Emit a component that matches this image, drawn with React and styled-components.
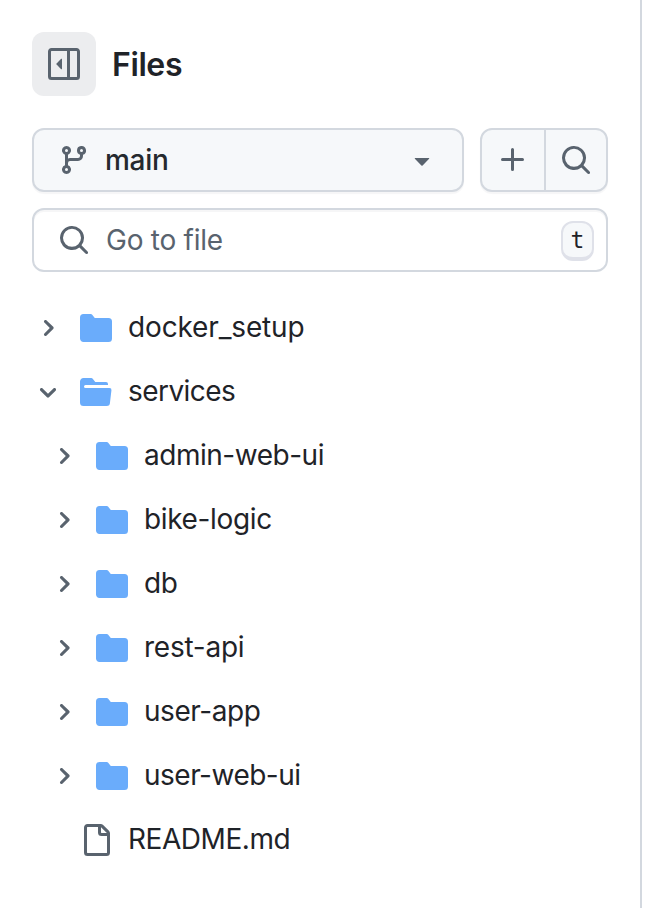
import React from "react";
import styled, { createGlobalStyle } from "styled-components";

const Global = createGlobalStyle`
  * { box-sizing: border-box; }
  body { margin: 0; background: #fff; font-family: Inter, "Liberation Sans", sans-serif; color: #1f2328; }
`;

const PATHS = {
  sidebar: [
    "m4.177 7.823 2.396-2.396A.25.25 0 0 1 7 5.604v4.792a.25.25 0 0 1-.427.177L4.177 8.177a.25.25 0 0 1 0-.354Z",
    "M0 1.75C0 .784.784 0 1.75 0h12.5C15.216 0 16 .784 16 1.75v12.5A1.75 1.75 0 0 1 14.25 16H1.75A1.75 1.75 0 0 1 0 14.25Zm1.75-.25a.25.25 0 0 0-.25.25v12.5c0 .138.112.25.25.25H9.5v-13Zm12.5 13a.25.25 0 0 0 .25-.25V1.75a.25.25 0 0 0-.25-.25H11v13Z",
  ],
  branch: [
    "M9.5 3.25a2.25 2.25 0 1 1 3 2.122V6A2.5 2.5 0 0 1 10 8.5H6a1 1 0 0 0-1 1v1.128a2.251 2.251 0 1 1-1.5 0V5.372a2.25 2.25 0 1 1 1.5 0v1.836A2.493 2.493 0 0 1 6 7h4a1 1 0 0 0 1-1v-.628A2.25 2.25 0 0 1 9.5 3.25Zm-6 0a.75.75 0 1 0 1.5 0 .75.75 0 0 0-1.5 0Zm8.25-.75a.75.75 0 1 0 0 1.5.75.75 0 0 0 0-1.5ZM4.25 12a.75.75 0 1 0 0 1.5.75.75 0 0 0 0-1.5Z",
  ],
  triangle: [
    "m4.427 7.427 3.396 3.396a.25.25 0 0 0 .354 0l3.396-3.396A.25.25 0 0 0 11.396 7H4.604a.25.25 0 0 0-.177.427Z",
  ],
  plus: [
    "M7.75 2a.75.75 0 0 1 .75.75V7h4.25a.75.75 0 0 1 0 1.5H8.5v4.25a.75.75 0 0 1-1.5 0V8.5H2.75a.75.75 0 0 1 0-1.5H7V2.75A.75.75 0 0 1 7.75 2Z",
  ],
  search: [
    "M10.68 11.74a6 6 0 0 1-7.922-8.982 6 6 0 0 1 8.982 7.922l3.04 3.04a.749.749 0 0 1-.326 1.275.749.749 0 0 1-.734-.215ZM11.5 7a4.499 4.499 0 1 0-8.997 0A4.499 4.499 0 0 0 11.5 7Z",
  ],
  folder: [
    "M1.75 1A1.75 1.75 0 0 0 0 2.75v10.5C0 14.216.784 15 1.75 15h12.5A1.75 1.75 0 0 0 16 13.25v-8.5A1.75 1.75 0 0 0 14.25 3H7.5a.25.25 0 0 1-.2-.1l-.9-1.2C6.07 1.26 5.55 1 5 1H1.75Z",
  ],
  folderOpen: [
    "M.513 1.513A1.75 1.75 0 0 1 1.75 1h3.5c.55 0 1.07.26 1.4.7l.9 1.2a.25.25 0 0 0 .2.1H13a1 1 0 0 1 1 1v.5H2.75a.75.75 0 0 0 0 1.5h11.978a1 1 0 0 1 .994 1.117L15 13.25A1.75 1.75 0 0 1 13.25 15H1.75A1.75 1.75 0 0 1 0 13.25V2.75c0-.464.184-.91.513-1.237Z",
  ],
  file: [
    "M2 1.75C2 .784 2.784 0 3.75 0h6.586c.464 0 .909.184 1.237.513l2.914 2.914c.329.328.513.773.513 1.237v9.586A1.75 1.75 0 0 1 13.25 16h-9.5A1.75 1.75 0 0 1 2 14.25Zm1.75-.25a.25.25 0 0 0-.25.25v12.5c0 .138.112.25.25.25h9.5a.25.25 0 0 0 .25-.25V6h-2.75A1.75 1.75 0 0 1 9 4.25V1.5Zm6.75.062V4.25c0 .138.112.25.25.25h2.688l-.011-.013-2.914-2.914-.013-.011Z",
  ],
};

const CHEVRONS = {
  right:
    "M4.7 10c-.2 0-.4-.1-.5-.2-.3-.3-.3-.8 0-1.1L6.9 6 4.2 3.3c-.3-.3-.3-.8 0-1.1.3-.3.8-.3 1.1 0l3.3 3.2c.3.3.3.8 0 1.1L5.3 9.7c-.2.2-.4.3-.6.3Z",
  down:
    "M6 8.825c-.2 0-.4-.1-.5-.2l-3.3-3.3c-.3-.3-.3-.8 0-1.1.3-.3.8-.3 1.1 0l2.7 2.7 2.7-2.7c.3-.3.8-.3 1.1 0 .3.3.3.8 0 1.1l-3.2 3.2c-.2.2-.4.3-.6.3Z",
};

const Svg = styled.svg`
  display: block;
  flex: none;
  fill: ${(p) => p.$color || "#59636e"};
`;

function Icon({ name, color }) {
  return (
    <Svg width="32" height="32" viewBox="0 0 16 16" $color={color} aria-hidden="true">
      {PATHS[name].map((d) => <path key={d} d={d} />)}
    </Svg>
  );
}

function Chevron({ direction }) {
  return (
    <Svg width="24" height="24" viewBox="0 0 12 12" aria-hidden="true">
      <path d={CHEVRONS[direction]} />
    </Svg>
  );
}

const Pane = styled.aside`
  width: 642px;
  height: 908px;
  padding: 32px 32px 0;
  border-right: 2px solid #d3d8df;
  overflow: hidden;
`;

const Header = styled.header`
  display: flex;
  align-items: center;
  gap: 16px;
  height: 64px;
`;

const ToggleButton = styled.button`
  display: grid;
  place-items: center;
  width: 64px;
  height: 64px;
  padding: 0;
  border: 0;
  border-radius: 12px;
  background: #ecedef;
`;

const Title = styled.h2`
  margin: 0;
  padding-top: 1px;
  font-size: 32px;
  line-height: 48px;
  font-weight: 600;
  letter-spacing: -0.4px;
`;

const Toolbar = styled.div`
  display: flex;
  gap: 16px;
  margin-top: 32px;
`;

const BranchButton = styled.button`
  display: flex;
  align-items: center;
  width: 432px;
  height: 64px;
  padding: 0 24px;
  border: 2px solid #d3d8df;
  border-radius: 12px;
  background: #f6f8fa;
  box-shadow: 0 2px 1px rgba(31, 35, 40, 0.04);
  color: #25292e;
  font: 500 28px/40px Inter, sans-serif;
`;

const BranchName = styled.span`
  flex: 1;
  margin-left: 15px;
  text-align: left;
  letter-spacing: -0.25px;
`;

const ButtonGroup = styled.div`
  display: flex;
  width: 128px;
  height: 64px;
  border: 2px solid #d3d8df;
  border-radius: 12px;
  background: #f6f8fa;
  box-shadow: 0 2px 1px rgba(31, 35, 40, 0.04);
`;

const GroupButton = styled.button`
  display: grid;
  place-items: center;
  width: 62px;
  padding: 0;
  border: 0;
  background: none;

  & + & {
    border-left: 2px solid #d3d8df;
  }
`;

const SearchField = styled.div`
  display: flex;
  align-items: center;
  height: 64px;
  margin-top: 16px;
  padding: 0 12px 0 24px;
  border: 2px solid #d3d8df;
  border-radius: 12px;
  box-shadow: inset 0 2px 0 rgba(31, 35, 40, 0.04);
`;

const Placeholder = styled.span`
  flex: 1;
  margin-left: 16px;
  color: #59636e;
  font-size: 28px;
  line-height: 40px;
  letter-spacing: -0.25px;
`;

const Key = styled.kbd`
  display: grid;
  place-items: center;
  width: 33px;
  height: 40px;
  margin-top: 1px;
  padding-top: 1px;
  border: 2px solid #dfe1e9;
  border-bottom-width: 4px;
  border-radius: 12px;
  background: #f6f8fa;
  font: 23px/20px "DejaVu Sans Mono", monospace;
`;

const Tree = styled.ul`
  margin: 24px 0 0;
  padding: 0;
  list-style: none;
`;

const TreeRow = styled.li`
  display: flex;
  align-items: center;
  height: 64px;
  padding-left: ${(p) => 4 + p.$level * 16}px;
`;

const ChevronSlot = styled.span`
  width: 24px;
  height: 24px;
  margin-right: 20px;
`;

const Label = styled.span`
  margin-left: 16px;
  padding-bottom: 2px;
  font-size: 28px;
  line-height: 40px;
  white-space: nowrap;
  letter-spacing: ${(p) => p.$tracking || 0}px;
`;

const ITEMS = [
  { name: "docker_setup", level: 0, icon: "folder", chevron: "right", tracking: -0.15 },
  { name: "services", level: 0, icon: "folderOpen", chevron: "down", tracking: -0.55 },
  { name: "admin-web-ui", level: 1, icon: "folder", chevron: "right", tracking: -0.48 },
  { name: "bike-logic", level: 1, icon: "folder", chevron: "right", tracking: -0.35 },
  { name: "db", level: 1, icon: "folder", chevron: "right", tracking: -0.4 },
  { name: "rest-api", level: 1, icon: "folder", chevron: "right", tracking: -0.25 },
  { name: "user-app", level: 1, icon: "folder", chevron: "right", tracking: -0.45 },
  { name: "user-web-ui", level: 1, icon: "folder", chevron: "right", tracking: -0.5 },
  { name: "README.md", level: 0, icon: "file", tracking: -0.45 },
];

export default function App() {
  return (
    <>
      <Global />
      <Pane>
        <Header>
          <ToggleButton aria-label="Collapse file tree"><Icon name="sidebar" /></ToggleButton>
          <Title>Files</Title>
        </Header>
        <Toolbar>
          <BranchButton>
            <Icon name="branch" />
            <BranchName>main</BranchName>
            <Icon name="triangle" />
          </BranchButton>
          <ButtonGroup>
            <GroupButton aria-label="Add file"><Icon name="plus" /></GroupButton>
            <GroupButton aria-label="Search"><Icon name="search" /></GroupButton>
          </ButtonGroup>
        </Toolbar>
        <SearchField>
          <Icon name="search" />
          <Placeholder>Go to file</Placeholder>
          <Key>t</Key>
        </SearchField>
        <Tree>
          {ITEMS.map((item) => (
            <TreeRow key={item.name} $level={item.level}>
              <ChevronSlot>{item.chevron && <Chevron direction={item.chevron} />}</ChevronSlot>
              <Icon name={item.icon} color={item.icon === "file" ? "#59636e" : "#6aacfb"} />
              <Label $tracking={item.tracking}>{item.name}</Label>
            </TreeRow>
          ))}
        </Tree>
      </Pane>
    </>
  );
}
